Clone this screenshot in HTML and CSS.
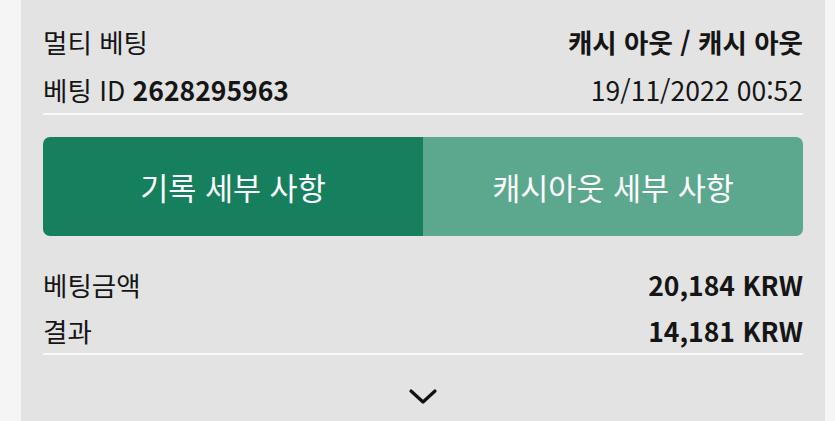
FILE: index.html
```html
<!DOCTYPE html>
<html lang="ko">
<head>
<meta charset="utf-8">
<link rel="stylesheet" href="styles.css">
</head>
<body>
<div class="card">
  <div class="section head">
    <div class="row"><span class="label">멀티 베팅</span><span class="bold">캐시 아웃 / 캐시 아웃</span></div>
    <div class="row"><span class="label">베팅 ID <b class="bold">2628295963</b></span><span>19/11/2022 00:52</span></div>
  </div>
  <div class="tabs">
    <div class="tab active">기록 세부 사항</div>
    <div class="tab">캐시아웃 세부 사항</div>
  </div>
  <div class="section sums">
    <div class="row"><span class="label">베팅금액</span><span class="bold">20,184 KRW</span></div>
    <div class="row"><span class="label">결과</span><span class="bold">14,181 KRW</span></div>
  </div>
  <div class="more">
    <svg width="30" height="18" viewBox="0 0 30 18"><polyline points="3,4 15,15 27,4" fill="none" stroke="#111" stroke-width="3.2" stroke-linecap="round" stroke-linejoin="round"/></svg>
  </div>
</div>
</body>
</html>
```

FILE: styles.css
```css
html, body {
  margin: 0;
  padding: 0;
}
body {
  background: #f5f5f5;
  font-family: "Noto Sans CJK KR", "Noto Sans", sans-serif;
  color: #151515;
  height: 421px;
  overflow: hidden;
}
.card {
  margin-left: 21px;
  width: 760px;
  padding: 0 22px;
  background: #e3e3e3;
  height: 421px;
}
.section {
  border-bottom: 2px solid #f9f9f9;
}
.head {
  padding-top: 17px;
}
.row {
  display: flex;
  justify-content: space-between;
  align-items: center;
  height: 48px;
  font-size: 26.5px;
}
.bold {
  font-weight: 700;
}
.tabs {
  display: flex;
  margin-top: 22px;
  height: 99px;
  border-radius: 7px;
  overflow: hidden;
}
.tab {
  flex: 1;
  display: flex;
  align-items: center;
  justify-content: center;
  color: #fff;
  font-size: 30.5px;
  background: #5ca88e;
}
.tab.active {
  background: #16805e;
}
.sums {
  margin-top: 25px;
}
.sums .row {
  height: 46px;
}
.more {
  display: flex;
  justify-content: center;
  padding-top: 32px;
}
```
